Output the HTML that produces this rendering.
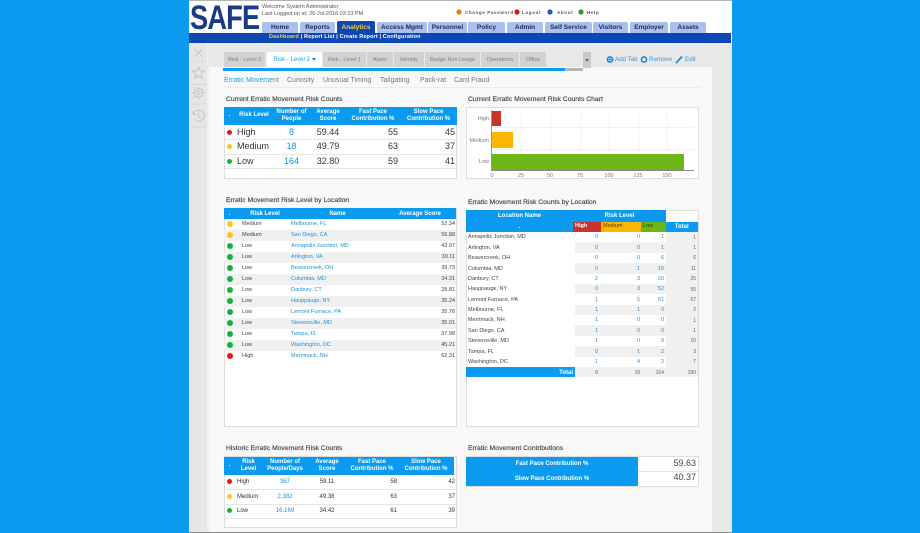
<!DOCTYPE html>
<html lang="en">
<head>
<meta charset="utf-8">
<title>SAFE Analytics Dashboard</title>
<style>
html,body{margin:0;padding:0;width:920px;height:533px;overflow:hidden;background:#0a9bf0;font-family:"Liberation Sans",sans-serif}
#p{position:relative;width:920px;height:533px;overflow:hidden}
.a{position:absolute;white-space:nowrap;line-height:1}
.tab{position:absolute;top:22px;height:11px;background:#a9c0ee;border-radius:2px 2px 0 0;font:bold 6.5px/11px "Liberation Sans",sans-serif;color:#1c2b52;text-align:center}
.rt{position:absolute;top:52px;height:15px;background:#d2d2d2;font-size:5.5px;line-height:16px;color:#808080;text-align:center}
.st{position:absolute;top:77px;font-size:7px;line-height:8px;color:#777;white-space:nowrap}
.ttl{position:absolute;font-size:6.8px;line-height:8px;color:#444;white-space:nowrap;-webkit-text-stroke:.15px #444}
.card{position:absolute;background:#fff;border:1px solid #ddd;box-sizing:border-box}
table{position:absolute;border-collapse:collapse;table-layout:fixed;line-height:1;color:#333}
td,th{padding:0;overflow:hidden;white-space:nowrap}
th{background:#0a9bf0;color:#fff;font-weight:bold;font-size:6px;line-height:7.3px;text-align:center}
.d{display:inline-block;border-radius:50%;vertical-align:middle}
.r{background:#f01212}.y{background:#fdc31b}.g{background:#12b33a}
.b{color:#1b93d8}.c{text-align:center}.e{text-align:right}
.t1 td{font-size:9px;height:14.5px;border-bottom:1px solid #e4e4e4;box-sizing:border-box}
.t1 .d{width:5px;height:5px}
.t2 td{font-size:5.5px;height:11px;color:#444}
.t2 td.b{color:#1b93d8}
.t2 th{line-height:6px}
.t2 .d{width:6px;height:6px}
.t2 tr:nth-child(odd) td{background:#f0f0f0}
.t3 td{font-size:5.5px;height:10.38px;color:#444;box-sizing:border-box;padding-top:2px}
.t3 td.n{color:#1b93d8;background:#fff}
.t3 tr.alt td.n{background:#f0f0f0}
.t3 td.tot{background:#f0f0f0;color:#666;font-size:5px}
.t4 td{font-size:6px;height:14.5px;border-bottom:1px solid #e4e4e4;box-sizing:border-box}
.t4 .d{width:5px;height:5px}
.pr{padding-right:2px}
.t3 td.p2{padding-right:2px}
.t3 td.p1{padding-right:1px}
</style>
</head>
<body>
<div id="p">
<!-- page shell -->
<div class="a" style="left:189px;top:0;width:543px;height:533px;background:#fff"></div>
<div class="a" style="left:189px;top:0;width:543px;height:1px;background:#b5b5b5"></div>
<div class="a" style="left:189px;top:43px;width:543px;height:490px;background:#e8e8e8"></div>
<div class="a" style="left:210px;top:67px;width:502px;height:466px;background:#f8f8f8"></div>

<!-- header -->
<div class="a" style="left:190px;top:1px;font:bold 34px/35px 'Liberation Sans',sans-serif;color:#1b3a85;transform:scaleX(.8);transform-origin:0 0;letter-spacing:-1px">SAFE</div>
<div class="a" style="left:262px;top:5px;font-size:5.5px;color:#555">Welcome System Administrator</div>
<div class="a" style="left:262px;top:12px;font-size:5.5px;color:#555">Last Logged on at: 26-Jul-2016 03:23 PM</div>

<svg class="a" style="left:455px;top:8px" width="130" height="8">
<circle cx="4" cy="4" r="2.6" fill="#e67a12"/><circle cx="62" cy="4" r="2.6" fill="#d11a1a"/><circle cx="95" cy="4" r="2.6" fill="#2457b8"/><circle cx="126" cy="4" r="2.6" fill="#2f9a2a"/>
</svg>
<div class="a" style="left:465px;top:10px;font:bold 4.5px/5px 'Liberation Sans',sans-serif;color:#555;letter-spacing:.65px">Change Password</div>
<div class="a" style="left:522px;top:10px;font:bold 4.5px/5px 'Liberation Sans',sans-serif;color:#555;letter-spacing:.65px">Logout</div>
<div class="a" style="left:557px;top:10px;font:bold 4.5px/5px 'Liberation Sans',sans-serif;color:#555;letter-spacing:.65px">About</div>
<div class="a" style="left:587px;top:10px;font:bold 4.5px/5px 'Liberation Sans',sans-serif;color:#555;letter-spacing:.65px">Help</div>

<div class="tab" style="left:262px;width:36px">Home</div>
<div class="tab" style="left:300px;width:35px">Reports</div>
<div class="tab" style="left:337px;width:38px;background:#0d47b5;color:#ffcc33;top:21px;height:12px;line-height:13px">Analytics</div>
<div class="tab" style="left:377px;width:50px">Access Mgmt</div>
<div class="tab" style="left:428px;width:39px">Personnel</div>
<div class="tab" style="left:468px;width:37px">Policy</div>
<div class="tab" style="left:507px;width:36px">Admin</div>
<div class="tab" style="left:545px;width:47px">Self Service</div>
<div class="tab" style="left:593px;width:35px">Visitors</div>
<div class="tab" style="left:630px;width:38px">Employer</div>
<div class="tab" style="left:670px;width:36px">Assets</div>

<div class="a" style="left:189px;top:33px;width:542px;height:10px;background:#0d47b5"></div>
<div class="a" style="left:269px;top:34px;font:bold 5.5px/6px 'Liberation Sans',sans-serif;color:#fff;letter-spacing:.14px"><span style="color:#ffcc33">Dashboard</span> | Report List | Create Report | Configuration</div>

<!-- sidebar -->
<div class="a" style="left:189px;top:43px;width:19px;height:490px;background:#e6e6e6"></div>
<div class="a" style="left:207px;top:43px;width:1px;height:490px;background:#efefef"></div>
<div class="a" style="left:208px;top:67px;width:2px;height:466px;background:#f1f1f1"></div>
<svg class="a" style="left:189px;top:43px" width="19" height="90" fill="none" stroke="#c6c6c6" stroke-width="1">
<path d="M1 18.500H18M1 41.500H18M1 61H18M1 84H18" stroke="#d8d8d8"/>
<path d="M5.500 6L13.500 14M13.500 6L5.500 14"/>
<path d="M9.500 24l1.700 3.800 4.100.4-3.100 2.800.9 4.100-3.600-2.100-3.600 2.100.9-4.100-3.100-2.800 4.100-.4z"/>
<circle cx="9.500" cy="50" r="4.200"/><circle cx="9.500" cy="50" r="1.700"/>
<path d="M9.500 44v1.800M9.500 54.200V56M3.500 50h1.800M13.700 50h1.800M5.300 45.800l1.200 1.200M12.500 53l1.200 1.200M13.700 45.800L12.500 47M6.500 53l-1.200 1.200"/>
<path d="M4.500 71a5.500 5.500 0 1 1 .8 5M4 68.500V71.500H7M9.500 69.500V74L12 75.500"/>
</svg>

<!-- risk tabs -->
<div class="rt" style="left:224px;width:41px">Risk - Level 3</div>
<div class="rt" style="left:267px;width:55px;background:#fff;color:#1b9ae4;font-size:6px">Risk - Level 2 <span style="display:inline-block;border:2.200px solid transparent;border-top:3px solid #1b7fd0;border-bottom:0;vertical-align:middle"></span></div>
<div class="rt" style="left:323px;width:43px">Risk - Level 1</div>
<div class="rt" style="left:367px;width:26px">Alarm</div>
<div class="rt" style="left:394px;width:30px">Identity</div>
<div class="rt" style="left:425px;width:55px">Badge Non Usage</div>
<div class="rt" style="left:481px;width:38px">Operations</div>
<div class="rt" style="left:520px;width:26px">Office</div>
<div class="a" style="left:583px;top:52px;width:8px;height:16px;background:#c9c9c9"></div>
<div class="a" style="left:585px;top:59px;border:2.500px solid transparent;border-top:3px solid #1b7fd0;border-bottom:0"></div>
<div class="a" style="left:223px;top:68px;width:342px;height:3px;background:#0a9bf0"></div>
<div class="a" style="left:565px;top:68px;width:18px;height:3px;background:#b5b5b5"></div>

<svg class="a" style="left:606px;top:55px" width="80" height="9">
<circle cx="4" cy="4.500" r="2.600" fill="none" stroke="#1f87d6" stroke-width="1.600"/><path d="M2.500 4.500H5.500M4 3V6" stroke="#1f87d6" stroke-width=".8"/>
<circle cx="38" cy="4.500" r="2.600" fill="none" stroke="#1f87d6" stroke-width="1.600"/>
<path d="M70 8.200L76 1.500" stroke="#1f87d6" stroke-width="1.700"/>
</svg>
<div class="a" style="left:615px;top:57px;font-size:6.200px;color:#3a98d8">Add Tab</div>
<div class="a" style="left:649px;top:57px;font-size:6.200px;color:#3a98d8">Remove</div>
<div class="a" style="left:685px;top:57px;font-size:6.200px;color:#3a98d8">Edit</div>

<!-- sub tabs -->
<div class="st" style="left:224px;color:#1b9ae4">Erratic Movement</div>
<div class="st" style="left:287px">Curiosity</div>
<div class="st" style="left:323px">Unusual Timing</div>
<div class="st" style="left:380px">Tailgating</div>
<div class="st" style="left:420px">Pack-rat</div>
<div class="st" style="left:454px">Card Fraud</div>
<div class="a" style="left:224px;top:87px;width:476px;height:1px;background:#ebebeb"></div>

<!-- card 1 -->
<div class="ttl" style="left:226px;top:96px">Current Erratic Movement Risk Counts</div>
<div class="card" style="left:224px;top:107px;width:233px;height:72px"></div>
<table class="t1" style="left:224px;top:107px;width:233px">
<colgroup><col style="width:11px"><col style="width:38px"><col style="width:37px"><col style="width:36px"><col style="width:54px"><col style="width:57px"></colgroup>
<tr style="height:18px"><th>.</th><th>Risk Level</th><th>Number of<br>People</th><th>Average<br>Score</th><th>Fast Pace<br>Contribution %</th><th>Slow Pace<br>Contribution %</th></tr>
<tr><td class="c"><span class="d r"></span></td><td style="padding-left:2px">High</td><td class="c b">8</td><td class="c">59.44</td><td class="e pr">55</td><td class="e pr">45</td></tr>
<tr><td class="c"><span class="d y"></span></td><td style="padding-left:2px">Medium</td><td class="c b">18</td><td class="c">49.79</td><td class="e pr">63</td><td class="e pr">37</td></tr>
<tr><td class="c"><span class="d g"></span></td><td style="padding-left:2px">Low</td><td class="c b">164</td><td class="c">32.80</td><td class="e pr">59</td><td class="e pr">41</td></tr>
</table>

<!-- chart -->
<div class="ttl" style="left:468px;top:96px">Current Erratic Movement Risk Counts Chart</div>
<div class="card" style="left:466px;top:107px;width:233px;height:72px"></div>
<svg class="a" style="left:466px;top:107px" width="233" height="72" font-family="Liberation Sans, sans-serif" font-size="5.500" fill="#777">
<path d="M55.500 3V63M84.500 3V63M114.500 3V63M143.500 3V63M172.500 3V63M201.500 3V63M26 20.500H228M26 42.500H228" stroke="#f2f2f2" fill="none"/>
<rect x="26" y="4" width="9" height="15" fill="#c9352a"/>
<rect x="26" y="25" width="21" height="16" fill="#fcb600"/>
<rect x="26" y="47" width="192" height="16" fill="#6eb51a"/>
<path d="M25.500 3V64" stroke="#999" stroke-width="1" fill="none"/>
<path d="M25 63.500H228" stroke="#888" stroke-width="1" fill="none"/>
<g text-anchor="end"><text x="23" y="13">High</text><text x="23" y="35">Medium</text><text x="23" y="56">Low</text></g>
<g text-anchor="middle"><text x="26" y="70">0</text><text x="55" y="70">25</text><text x="84" y="70">50</text><text x="114" y="70">75</text><text x="143" y="70">100</text><text x="172" y="70">125</text><text x="201" y="70">150</text></g>
</svg>

<!-- card 2 -->
<div class="ttl" style="left:226px;top:197px">Erratic Movement Risk Level by Location</div>
<div class="card" style="left:224px;top:208px;width:233px;height:219px"></div>
<table class="t2" style="left:224px;top:208px;width:232px">
<colgroup><col style="width:11px"><col style="width:56px"><col style="width:89px"><col style="width:76px"></colgroup>
<tr style="height:11px"><th>.</th><th style="padding-left:4px">Risk Level</th><th style="padding-left:4px">Name</th><th style="padding-left:4px">Average Score</th></tr>
<tr><td class="c"><span class="d y"></span></td><td style="padding-left:7px">Medium</td><td class="b">Melbourne, FL</td><td class="e" style="padding-right:1px">52.34</td></tr>
<tr><td class="c"><span class="d y"></span></td><td style="padding-left:7px">Medium</td><td class="b">San Diego, CA</td><td class="e" style="padding-right:1px">56.88</td></tr>
<tr><td class="c"><span class="d g"></span></td><td style="padding-left:7px">Low</td><td class="b">Annapolis Junction, MD</td><td class="e" style="padding-right:1px">43.97</td></tr>
<tr><td class="c"><span class="d g"></span></td><td style="padding-left:7px">Low</td><td class="b">Arlington, VA</td><td class="e" style="padding-right:1px">30.11</td></tr>
<tr><td class="c"><span class="d g"></span></td><td style="padding-left:7px">Low</td><td class="b">Beavercreek, OH</td><td class="e" style="padding-right:1px">39.73</td></tr>
<tr><td class="c"><span class="d g"></span></td><td style="padding-left:7px">Low</td><td class="b">Columbia, MD</td><td class="e" style="padding-right:1px">34.31</td></tr>
<tr><td class="c"><span class="d g"></span></td><td style="padding-left:7px">Low</td><td class="b">Danbury, CT</td><td class="e" style="padding-right:1px">28.81</td></tr>
<tr><td class="c"><span class="d g"></span></td><td style="padding-left:7px">Low</td><td class="b">Hauppauge, NY</td><td class="e" style="padding-right:1px">35.24</td></tr>
<tr><td class="c"><span class="d g"></span></td><td style="padding-left:7px">Low</td><td class="b">Lemont Furnace, PA</td><td class="e" style="padding-right:1px">35.78</td></tr>
<tr><td class="c"><span class="d g"></span></td><td style="padding-left:7px">Low</td><td class="b">Stevensville, MD</td><td class="e" style="padding-right:1px">35.01</td></tr>
<tr><td class="c"><span class="d g"></span></td><td style="padding-left:7px">Low</td><td class="b">Tampa, FL</td><td class="e" style="padding-right:1px">37.98</td></tr>
<tr><td class="c"><span class="d g"></span></td><td style="padding-left:7px">Low</td><td class="b">Washington, DC</td><td class="e" style="padding-right:1px">45.21</td></tr>
<tr><td class="c"><span class="d r"></span></td><td style="padding-left:7px">High</td><td class="b">Merrimack, NH</td><td class="e" style="padding-right:1px">62.31</td></tr>
</table>

<!-- card 3 -->
<div class="ttl" style="left:468px;top:199px">Erratic Movement Risk Counts by Location</div>
<div class="card" style="left:466px;top:210px;width:233px;height:217px"></div>
<div class="a" style="left:466px;top:210px;width:200px;height:12px;background:#0a9bf0"></div>
<div class="a" style="left:466px;top:222px;width:107px;height:10px;background:#0a9bf0"></div>
<div class="a" style="left:466px;top:213px;width:107px;text-align:center;font:bold 6px/7px 'Liberation Sans',sans-serif;color:#fff">Location Name</div>
<div class="a" style="left:466px;top:224px;width:107px;text-align:center;font:bold 6px/7px 'Liberation Sans',sans-serif;color:#fff">.</div>
<div class="a" style="left:573px;top:213px;width:93px;text-align:center;font:bold 6px/7px 'Liberation Sans',sans-serif;color:#fff">Risk Level</div>
<div class="a" style="left:573px;top:222px;width:28px;height:10px;background:#c9352a;color:#fff;font:bold 5.500px/8px 'Liberation Sans',sans-serif;text-indent:2px">High</div>
<div class="a" style="left:601px;top:222px;width:40px;height:10px;background:#fcb600;color:#5a4300;font:5.500px/8px 'Liberation Sans',sans-serif;text-indent:2px">Medium</div>
<div class="a" style="left:641px;top:222px;width:25px;height:10px;background:#6eb51a;color:#28430a;font:5.500px/8px 'Liberation Sans',sans-serif;text-indent:2px">Low</div>
<div class="a" style="left:666px;top:222px;width:31.500px;height:10px;background:#0a9bf0;color:#fff;font:bold 6px/10px 'Liberation Sans',sans-serif;text-align:center">Total</div>
<table class="t3" style="left:466px;top:232px;width:232px">
<colgroup><col style="width:109px"><col style="width:25px"><col style="width:41px"><col style="width:25px"><col style="width:32px"></colgroup>
<tr><td style="padding-left:2px">Annapolis Junction, MD</td><td class="n e p2">0</td><td class="n e p1">0</td><td class="n e p2">1</td><td class="tot e p2">1</td></tr>
<tr class="alt"><td style="padding-left:2px">Arlington, VA</td><td class="n e p2">0</td><td class="n e p1">0</td><td class="n e p2">1</td><td class="tot e p2">1</td></tr>
<tr><td style="padding-left:2px">Beavercreek, OH</td><td class="n e p2">0</td><td class="n e p1">0</td><td class="n e p2">6</td><td class="tot e p2">6</td></tr>
<tr class="alt"><td style="padding-left:2px">Columbia, MD</td><td class="n e p2">0</td><td class="n e p1">1</td><td class="n e p2">10</td><td class="tot e p2">11</td></tr>
<tr><td style="padding-left:2px">Danbury, CT</td><td class="n e p2">2</td><td class="n e p1">3</td><td class="n e p2">20</td><td class="tot e p2">25</td></tr>
<tr class="alt"><td style="padding-left:2px">Hauppauge, NY</td><td class="n e p2">0</td><td class="n e p1">3</td><td class="n e p2">52</td><td class="tot e p2">55</td></tr>
<tr><td style="padding-left:2px">Lemont Furnace, PA</td><td class="n e p2">1</td><td class="n e p1">5</td><td class="n e p2">61</td><td class="tot e p2">67</td></tr>
<tr class="alt"><td style="padding-left:2px">Melbourne, FL</td><td class="n e p2">1</td><td class="n e p1">1</td><td class="n e p2">0</td><td class="tot e p2">2</td></tr>
<tr><td style="padding-left:2px">Merrimack, NH</td><td class="n e p2">1</td><td class="n e p1">0</td><td class="n e p2">0</td><td class="tot e p2">1</td></tr>
<tr class="alt"><td style="padding-left:2px">San Diego, CA</td><td class="n e p2">1</td><td class="n e p1">0</td><td class="n e p2">0</td><td class="tot e p2">1</td></tr>
<tr><td style="padding-left:2px">Stevensville, MD</td><td class="n e p2">1</td><td class="n e p1">0</td><td class="n e p2">9</td><td class="tot e p2">10</td></tr>
<tr class="alt"><td style="padding-left:2px">Tampa, FL</td><td class="n e p2">0</td><td class="n e p1">1</td><td class="n e p2">2</td><td class="tot e p2">3</td></tr>
<tr><td style="padding-left:2px">Washington, DC</td><td class="n e p2">1</td><td class="n e p1">4</td><td class="n e p2">2</td><td class="tot e p2">7</td></tr>
<tr><td class="e p2" style="background:#0a9bf0;color:#fff;font-weight:bold;font-size:6px">Total</td><td class="tot e p2">8</td><td class="tot e p1">18</td><td class="tot e p2">164</td><td class="tot e p2">190</td></tr>
</table>

<!-- card 4 -->
<div class="ttl" style="left:226px;top:445px">Historic Erratic Movement Risk Counts</div>
<div class="card" style="left:224px;top:456px;width:233px;height:72px"></div>
<table class="t4" style="left:224px;top:457px;width:232px">
<colgroup><col style="width:11px"><col style="width:27px"><col style="width:46px"><col style="width:38px"><col style="width:52px"><col style="width:56px"><col style="width:2px"></colgroup>
<tr style="height:18px"><th>.</th><th>Risk<br>Level</th><th>Number of<br>People/Days</th><th>Average<br>Score</th><th>Fast Pace<br>Contribution %</th><th>Slow Pace<br>Contribution %</th><th style="background:#fff"></th></tr>
<tr><td class="c"><span class="d r"></span></td><td style="padding-left:2px">High</td><td class="c b">367</td><td class="c">59.11</td><td class="e" style="padding-right:1px">58</td><td class="e" colspan="2" style="padding-right:1px">42</td></tr>
<tr><td class="c"><span class="d y"></span></td><td style="padding-left:2px">Medium</td><td class="c b">2,382</td><td class="c">49.38</td><td class="e" style="padding-right:1px">63</td><td class="e" colspan="2" style="padding-right:1px">37</td></tr>
<tr><td class="c"><span class="d g"></span></td><td style="padding-left:2px">Low</td><td class="c b">16,169</td><td class="c">34.42</td><td class="e" style="padding-right:1px">61</td><td class="e" colspan="2" style="padding-right:1px">39</td></tr>
</table>

<!-- card 5 -->
<div class="ttl" style="left:468px;top:445px">Erratic Movement Contributions</div>
<div class="card" style="left:466px;top:456px;width:233px;height:31px"></div>
<div class="a" style="left:466px;top:457px;width:172px;height:29px;background:#0a9bf0"></div>
<div class="a" style="left:638px;top:471px;width:60px;height:1px;background:#e4e4e4"></div>
<div class="a" style="left:466px;top:461px;width:172px;text-align:center;font:bold 6px/7px 'Liberation Sans',sans-serif;color:#fff">Fast Pace Contribution %</div>
<div class="a" style="left:466px;top:476px;width:172px;text-align:center;font:bold 6px/7px 'Liberation Sans',sans-serif;color:#fff">Slow Pace Contribution %</div>
<div class="a" style="left:638px;top:459px;width:58px;text-align:right;font-size:9px;color:#444">59.63</div>
<div class="a" style="left:638px;top:473px;width:58px;text-align:right;font-size:9px;color:#444">40.37</div>

<div class="a" style="left:189px;top:532px;width:543px;height:1px;background:#8a8a8a"></div>
</div>
</body>
</html>
